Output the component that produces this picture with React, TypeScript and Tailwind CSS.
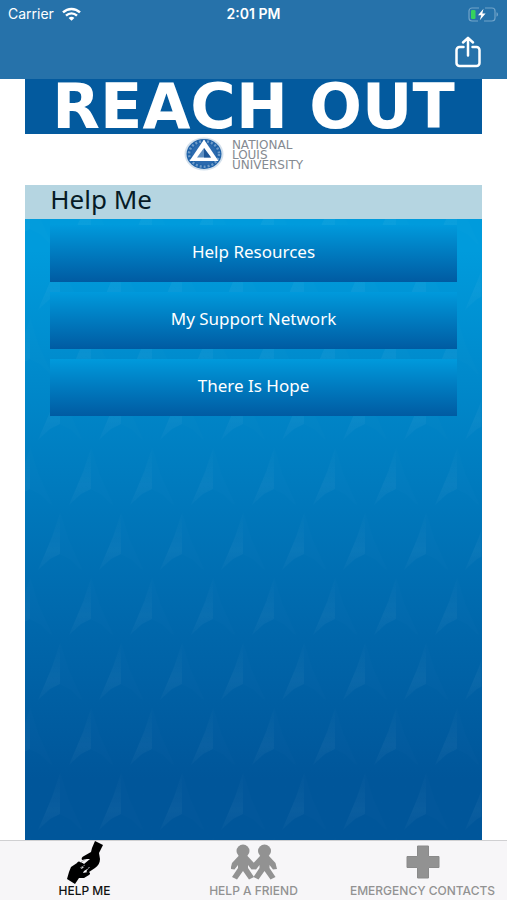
import type { ReactNode } from 'react';

interface Tab {
  label: string;
  icon: ReactNode;
  active?: boolean;
}

const resources = ['Help Resources', 'My Support Network', 'There Is Hope'];

const WifiIcon = () => (
  <svg width="19" height="14" viewBox="0 0 19 14" fill="none" stroke="#fff" strokeWidth="2.4" aria-hidden="true">
    <path d="M1 5.4C5.8.8 13.2.8 18 5.4" />
    <path d="M4 8.6c3.2-3 7.8-3 11 0" />
    <path d="M9.5 13.8 6.6 10.9c1.7-1.5 4.1-1.5 5.8 0z" fill="#fff" stroke="none" />
  </svg>
);

const BatteryIcon = () => (
  <svg width="31" height="15" viewBox="0 0 31 15" fill="none" aria-hidden="true">
    <path d="M11 1H4a3 3 0 0 0-3 3v7a3 3 0 0 0 3 3h6M17 1h7a3 3 0 0 1 3 3v7a3 3 0 0 1-3 3h-8" stroke="#70a3c9" strokeWidth="1.2" />
    <path d="M28.5 5.3c2 .7 2 3.7 0 4.4z" fill="#70a3c9" />
    <rect x="3" y="3" width="4.5" height="9" rx="1.2" fill="#35d35c" />
    <path d="M15.5 1.8 10 8.2h3.2l-1.4 5L17.6 6.6h-3.3z" fill="#fff" />
  </svg>
);

const ShareIcon = () => (
  <svg width="26" height="32" viewBox="0 0 26 32" fill="none" stroke="#fff" strokeWidth="2.5" strokeLinecap="round" strokeLinejoin="round" aria-hidden="true">
    <path d="M8.5 11h-4a3 3 0 0 0-3 3v13a3 3 0 0 0 3 3h17a3 3 0 0 0 3-3V14a3 3 0 0 0-3-3h-4" />
    <path d="M13 19.5V2M8 6.5l5-4.7 5 4.7" />
  </svg>
);

const SealLogo = () => (
  <svg width="40" height="34" viewBox="0 0 40 34" aria-hidden="true">
    <ellipse cx="20" cy="17" rx="19.5" ry="16.5" fill="#d3e0ec" />
    <ellipse cx="20" cy="17" rx="17.5" ry="15" fill="#1f62a8" />
    <ellipse cx="20" cy="17" rx="15" ry="12.7" fill="none" stroke="#6f9bc8" strokeWidth="2.5" strokeDasharray="2 2" />
    <ellipse cx="20" cy="17" rx="12.5" ry="10.8" fill="#2b6aae" />
    <path d="M20 2.5 34.5 24h-29z" fill="#fff" />
    <path d="M20 11l7 9.5H13z" fill="#5f8fc1" />
    <path d="M20 11l7 9.5h-7z" fill="#1f5797" />
  </svg>
);

const HandsIcon = () => (
  <svg width="38" height="44" viewBox="0 0 38 44" aria-hidden="true">
    {/* upper hand reaching down */}
    <path d="M29 1l8 4-4 8 1 6c0 4-2 7-5 9l-6 4c-2 1-3 0-2-2l3-3-5 1-3-1 2-3 6-5-3 0-5 1c-1-2 0-3 2-4l7-4 1-4z" fill="#000" />
    {/* lower hand reaching up */}
    <path d="M1 39l8 5 4-6h5l5-3c2-1 1-3-1-3l-5 1 1-2 5-3-2-2-6 3 2-5c-1-2-4-2-6-1l-6 4-2 5z" fill="#000" />
    <path d="M13 23l6 3" fill="none" stroke="#000" strokeWidth="3" strokeLinecap="round" />
    <path d="M14.5 22.5l5-3M14 28l5-3" stroke="#999" strokeWidth="0.7" />
  </svg>
);

const FriendsIcon = () => (
  <svg width="46" height="36" viewBox="0 0 46 36" aria-hidden="true">
    <defs>
      <g id="friend">
        <circle cx="0" cy="7" r="6.5" />
        <path d="M-4.500 12h9l6.500 7 1.500 6-4 .5L5 21v3l6 9-5 2.500L0 27l-6 8.500L-11 33l6-9v-3l-3.500 4.500-4-.5 1.500-6z" />
      </g>
    </defs>
    <g fill="#929292">
      <use href="#friend" x="12" />
      <use href="#friend" x="33.5" />
    </g>
  </svg>
);

const CrossIcon = () => (
  <svg width="34" height="34" viewBox="0 0 34 34" aria-hidden="true">
    <path d="M11.5 1h11v10.5H33v11H22.5V33h-11V22.5H1v-11h10.5z" fill="#929292" stroke="#8a8a8a" strokeWidth="1" />
  </svg>
);

// Faceted triangles repeated in staggered rows over the gradient
const FacetPattern = () => (
  <svg className="absolute inset-0 h-full w-full" aria-hidden="true">
    <defs>
      <linearGradient id="facet-light" x1="0" y1="0" x2="0" y2="1">
        <stop offset="0" stopColor="#fff" stopOpacity="0.01" />
        <stop offset="0.65" stopColor="#fff" stopOpacity="0.04" />
        <stop offset="1" stopColor="#fff" stopOpacity="0.02" />
      </linearGradient>
      <g id="facet">
        <path d="M0 0-8 24-22 57-10 46 0 41z" fill="url(#facet-light)" />
        <path d="M0 0 8 26 22 57 10 46 0 41z" fill="#fff" fillOpacity="0.006" />
      </g>
      <pattern id="facets" x="0" y="33" width="61" height="130" patternUnits="userSpaceOnUse">
        <use href="#facet" x="35" y="1" />
        <use href="#facet" x="5" y="66" />
        <use href="#facet" x="66" y="66" />
      </pattern>
    </defs>
    <rect width="100%" height="100%" fill="url(#facets)" />
  </svg>
);

const tabs: Tab[] = [
  { label: 'HELP ME', icon: <HandsIcon />, active: true },
  { label: 'HELP A FRIEND', icon: <FriendsIcon /> },
  { label: 'EMERGENCY CONTACTS', icon: <CrossIcon /> },
];

const App = () => {
  return (
    <div className="flex min-h-screen flex-col bg-white font-['Noto_Sans',sans-serif]">
      {/* Status bar and toolbar */}
      <header className="bg-[#2672aa] font-['Inter',sans-serif] text-white">
        <div className="grid h-7 grid-cols-3 items-center px-2 text-sm">
          <div className="flex items-center gap-2">
            <span>Carrier</span>
            <WifiIcon />
          </div>
          <div className="text-center font-semibold">2:01 PM</div>
          <div className="flex justify-end">
            <BatteryIcon />
          </div>
        </div>
        <div className="flex h-[51px] items-start justify-end px-[26px] pt-2">
          <button type="button" aria-label="Share">
            <ShareIcon />
          </button>
        </div>
      </header>

      <main className="mx-[5%] flex flex-1 flex-col">
        {/* Banner */}
        <h1 className="flex h-[55px] items-center justify-center whitespace-nowrap bg-[#035a9e] font-['DejaVu_Sans',sans-serif] text-[62px] leading-[52px] font-bold text-white">
          REACH OUT
        </h1>
        <div className="flex h-[51px] items-start justify-center gap-2 pt-[3px] pr-5">
          <SealLogo />
          <div className="pt-[3px] font-['DejaVu_Sans',sans-serif] text-xs leading-[10px] text-[#858a91]">
            <div>NATIONAL</div>
            <div>LOUIS</div>
            <div>UNIVERSITY</div>
          </div>
        </div>

        <h2 className="h-[34px] bg-[#b5d5e1] px-[25px] text-[26px] leading-[28px] text-[#061b26]">Help Me</h2>

        <section className="relative flex-1 bg-linear-to-b from-[#009bdc] from-5% via-[#0068ac] via-65% to-[#00569a] to-90%">
          <FacetPattern />
          <div className="relative flex flex-col gap-2.5 px-[25px] py-1.5">
            {resources.map(name => (
              <button
                key={name}
                type="button"
                className="h-[57px] w-full bg-linear-to-b from-[#009adc] to-[#005ba2] pb-1 text-[17px] text-white"
              >
                {name}
              </button>
            ))}
          </div>
        </section>
      </main>

      {/* Tab bar */}
      <nav className="grid h-[60px] grid-cols-3 border-t border-[#d0d0d2] bg-[#f7f6f8] font-['Inter',sans-serif]">
        {tabs.map(tab => (
          <button
            key={tab.label}
            type="button"
            className={`flex flex-col items-center text-xs font-medium whitespace-nowrap ${
              tab.active ? 'text-[#111111]' : 'text-[#929292]'
            }`}
          >
            <span className="flex h-[42px] items-center">{tab.icon}</span>
            <span className="leading-4">{tab.label}</span>
          </button>
        ))}
      </nav>
    </div>
  );
};

export default App;
